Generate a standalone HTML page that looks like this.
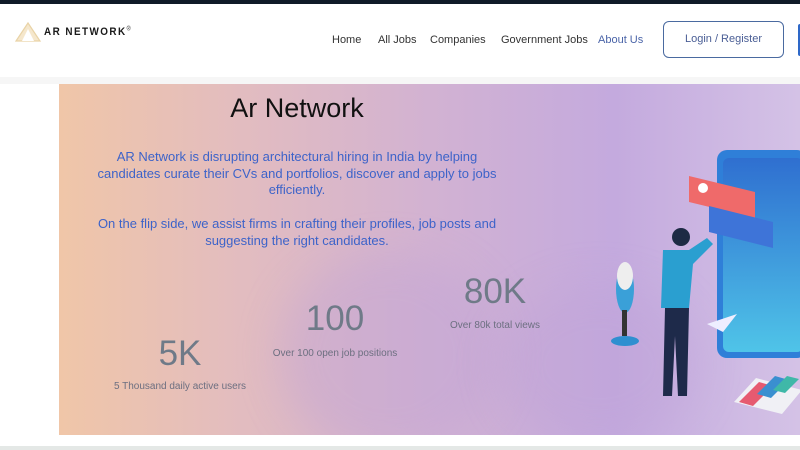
<!DOCTYPE html>
<html><head><meta charset="utf-8"><style>
*{margin:0;padding:0;box-sizing:border-box}
body{width:800px;height:450px;overflow:hidden;background:#fff;font-family:"Liberation Sans",sans-serif;position:relative}
.top{position:absolute;left:0;top:0;width:800px;height:4px;background:#0f1a28}
.hdr{position:absolute;top:4px;left:0;width:800px;height:73px;background:#fff}
.strip{position:absolute;top:77px;left:0;width:800px;height:7px;background:#f6f6f6}
.logo{position:absolute;left:44px;top:22px;font-weight:bold;font-size:11px;letter-spacing:1.6px;color:#1a1a1a;transform:scaleX(.9);transform-origin:left}
nav a{position:absolute;top:30px;font-size:11px;color:#333;text-decoration:none}
.btn{position:absolute;left:663px;top:17px;width:121px;height:37px;border:1px solid #4a6aa0;border-radius:6px;color:#4a5e95;font-size:11px;text-align:center;line-height:35px}
.btn2{position:absolute;left:798px;top:20px;width:4px;height:32px;background:#2e68c8;border-radius:2px}
.hero{position:absolute;left:59px;top:84px;width:741px;height:351px;background:linear-gradient(90deg,#f0c6a8 0%,#e2bcc0 25%,#d2b2d2 50%,#c4aade 75%,#d4c2e6 100%);overflow:hidden}
.blob{position:absolute;border-radius:50%;background:rgba(190,160,215,.35);filter:blur(20px)}
h1{position:absolute;left:88px;width:300px;text-align:center;top:9px;font-weight:normal;font-size:27px;color:#111}
.p{position:absolute;width:430px;left:23px;text-align:center;font-size:13px;line-height:16.5px;color:#3d63c9}
.num{position:absolute;text-align:center;color:#6f7a88;font-size:35px;width:200px}
.lab{position:absolute;text-align:center;color:#6c6f80;font-size:10px;width:200px}
.bottom{position:absolute;left:0;top:446px;width:800px;height:4px;background:#e4e8e6}
</style></head><body>
<div class="top"></div>
<div class="hdr">
<svg style="position:absolute;left:14px;top:17px" width="28" height="22" viewBox="0 0 28 22"><path d="M14 2L2 20h24z" fill="#f5e7cc" stroke="#e9d3a6" stroke-width="1.2"/><path d="M14 8l-6 12h12z" fill="#fff"/></svg>
<div class="logo">AR NETWORK<sup style="font-size:6px;font-weight:normal">®</sup></div>
<nav><a style="left:332px">Home</a><a style="left:378px">All Jobs</a><a style="left:430px">Companies</a><a style="left:501px">Government Jobs</a><a style="left:598px;color:#4a64a8">About Us</a></nav>
<div class="btn">Login / Register</div><div class="btn2"></div>
</div>
<div class="strip"></div>
<div class="hero">
<div class="blob" style="left:220px;top:170px;width:220px;height:200px"></div>
<div class="blob" style="left:440px;top:200px;width:200px;height:160px"></div>
<h1>Ar Network</h1>
<div class="p" style="top:65px">AR Network is disrupting architectural hiring in India by helping<br>candidates curate their CVs and portfolios, discover and apply to jobs<br>efficiently.</div>
<div class="p" style="top:132px">On the flip side, we assist firms in crafting their profiles, job posts and<br>suggesting the right candidates.</div>
<div class="num" style="left:21px;top:250px">5K</div>
<div class="lab" style="left:21px;top:297px">5 Thousand daily active users</div>
<div class="num" style="left:176px;top:215px">100</div>
<div class="lab" style="left:176px;top:264px">Over 100 open job positions</div>
<div class="num" style="left:336px;top:188px">80K</div>
<div class="lab" style="left:336px;top:236px">Over 80k total views</div>
<svg style="position:absolute;left:540px;top:60px" width="201" height="291" viewBox="540 60 201 291">
<defs><linearGradient id="g" x1="0" y1="0" x2="0" y2="1"><stop offset="0" stop-color="#2f6fd0"/><stop offset="1" stop-color="#4fc4e8"/></linearGradient></defs>
<rect x="658" y="66" width="90" height="208" rx="10" fill="#2f7fd8"/>
<rect x="664" y="74" width="80" height="194" rx="6" fill="url(#g)"/>
<path d="M630 92l66 16v26l-66-16z" fill="#ef6a6a"/>
<path d="M650 122l64 16v26l-64-16z" fill="#3e74d8"/>
<circle cx="644" cy="104" r="5" fill="#fff"/>
<path d="M648 240l30-10-14 18z" fill="#eef"/>
<ellipse cx="566" cy="205" rx="9" ry="24" fill="#3aa0d8"/>
<ellipse cx="566" cy="192" rx="8" ry="14" fill="#eee"/>
<rect x="563" y="226" width="5" height="26" fill="#333"/>
<ellipse cx="566" cy="257" rx="14" ry="5" fill="#2f8fd0"/>
<circle cx="622" cy="153" r="9" fill="#1d2a44"/>
<path d="M604 166h26l18-12 6 6-20 20-4 44h-28z" fill="#2a9fd0"/>
<path d="M606 224h24l-2 88h-9l-3-60-3 60h-9z" fill="#1e2a4a"/>
<path d="M675 318l22-24 46 12-20 24z" fill="#f0f0f5"/>
<path d="M680 318l20-20 14 4-20 20z" fill="#e65a70"/>
<path d="M698 310l18-18 14 4-18 18z" fill="#3a8fd0"/>
<path d="M714 306l14-14 12 3-14 14z" fill="#3fb8a8"/>
</svg>
</div>
<div class="bottom"></div>
</body></html>
